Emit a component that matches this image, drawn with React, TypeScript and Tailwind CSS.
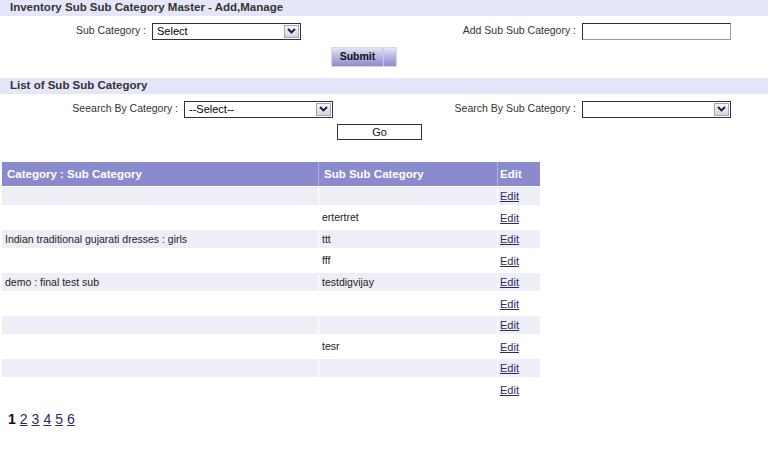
import React from 'react';

const font = { fontFamily: '"Liberation Sans", Arial, sans-serif' };

function Chevron() {
  return (
    <svg width="9" height="6" viewBox="0 0 9 6" className="block">
      <path d="M1 1 L4.5 4.5 L8 1" fill="none" stroke="#1a1a3a" strokeWidth="1.8" />
    </svg>
  );
}

function FakeSelect({ width, value }: { width: string; value: string }) {
  return (
    <div className={`${width} h-[17px] border border-[#333] bg-white flex items-center justify-between`}>
      <span className="pl-[4px] text-[11px] text-black leading-none">{value}</span>
      <div className="h-[13px] w-[15px] mr-[1px] border border-[#a5a5b5] bg-gradient-to-b from-[#f4f4f8] to-[#d4d4e0] flex items-center justify-center">
        <Chevron />
      </div>
    </div>
  );
}

type Row = { cat: string; sub: string };

const rows: Row[] = [
  { cat: '', sub: '' },
  { cat: '', sub: 'ertertret' },
  { cat: 'Indian traditional gujarati dresses : girls', sub: 'ttt' },
  { cat: '', sub: 'fff' },
  { cat: 'demo : final test sub', sub: 'testdigvijay' },
  { cat: '', sub: '' },
  { cat: '', sub: '' },
  { cat: '', sub: 'tesr' },
  { cat: '', sub: '' },
  { cat: '', sub: '' },
];

function App() {
  return (
    <div className="w-[768px] h-[462px] bg-white text-[#333] overflow-hidden" style={font}>
      <div className="h-[16px] bg-[#e6e6fa] pl-[10px] text-[11.5px] font-bold leading-[15px] text-[#333]">
        Inventory Sub Sub Category Master - Add,Manage
      </div>

      <div className="mt-[6px] flex items-center h-[18px]">
        <div className="w-[146px] text-right text-[10.5px] text-[#333]">Sub Category :</div>
        <div className="ml-[6px]">
          <FakeSelect width="w-[149px]" value="Select" />
        </div>
        <div className="w-[275px] text-right text-[10.5px] text-[#333]">Add Sub Sub Category :</div>
        <div className="ml-[6px] w-[149px] h-[17px] border border-[#333] border-r-[#999] border-b-[#999] bg-white" />
      </div>

      <div className="mt-[7px] ml-[331px] w-[66px] h-[20px] border border-[#d8d8e4] bg-gradient-to-b from-[#e4e4f6] via-[#b4b4e2] to-[#8c8cce] flex">
        <div className="w-[51px] flex items-center justify-center text-[10.5px] font-bold text-[#111]">Submit</div>
        <div className="w-px bg-[#c8c8ec]" />
      </div>

      <div className="mt-[11px] h-[16px] bg-[#e6e6fa] pl-[10px] text-[11.5px] font-bold leading-[15px] text-[#333]">
        List of Sub Sub Category
      </div>

      <div className="mt-[6px] flex items-center h-[18px]">
        <div className="w-[178px] text-right text-[10.5px] text-[#333]">Seearch By Category :</div>
        <div className="ml-[6px]">
          <FakeSelect width="w-[149px]" value="--Select--" />
        </div>
        <div className="w-[243px] text-right text-[10.5px] text-[#333]">Search By Sub Category :</div>
        <div className="ml-[6px]">
          <FakeSelect width="w-[149px]" value="" />
        </div>
      </div>

      <div className="mt-[6px] ml-[337px] w-[85px] h-[16px] border border-[#333] bg-white flex items-center justify-center text-[11px] text-[#111]">
        Go
      </div>

      <div className="mt-[22px] ml-[2px] w-[538px]">
        <div className="flex h-[24px] bg-[#8a8acc] text-white text-[11.5px] font-bold">
          <div className="w-[316px] pl-[5px] pt-[2px] flex items-center">Category : Sub Category</div>
          <div className="w-px bg-[#b0b0dc]" />
          <div className="w-[178px] pl-[5px] pt-[2px] flex items-center">Sub Sub Category</div>
          <div className="w-px bg-[#b0b0dc]" />
          <div className="flex-1 pl-[2px] pt-[2px] flex items-center">Edit</div>
        </div>
        {rows.map((r, i) => (
          <div
            key={i}
            className={`flex h-[18px] text-[10.5px] text-[#222] ${i === 0 ? 'mt-[1px]' : 'mt-[3.5px]'}`}
          >
            <div className={`w-[316px] pl-[3px] pt-px flex items-center ${i % 2 === 0 ? 'bg-[#eeeef6]' : ''}`}>{r.cat}</div>
            <div className="w-px" />
            <div className={`w-[178px] pl-[3px] pt-px flex items-center ${i % 2 === 0 ? 'bg-[#eeeef6]' : ''}`}>{r.sub}</div>
            <div className="w-px" />
            <div className={`flex-1 pl-[2px] pt-px flex items-center text-[11px] ${i % 2 === 0 ? 'bg-[#eeeef6]' : ''}`}>
              <a href="#" className="underline text-[#2b2b5e]">Edit</a>
            </div>
          </div>
        ))}
      </div>

      <div className="mt-[10px] ml-[8px] text-[14px] flex gap-[4px]">
        <span className="font-bold text-[#111]">1</span>
        {[2, 3, 4, 5, 6].map((n) => (
          <a key={n} href="#" className="underline text-[#2b2b5e]">{n}</a>
        ))}
      </div>
    </div>
  );
}

export default App;
